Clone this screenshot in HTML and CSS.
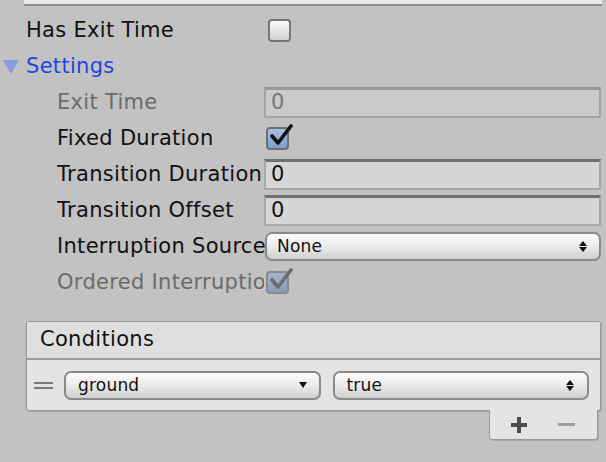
FILE: index.html
```html
<!DOCTYPE html>
<html>
<head>
<meta charset="utf-8">
<link rel="stylesheet" href="styles.css">
</head>
<body>
<div class="topbar"></div>
<div class="props">
  <div class="row outer">
    <div class="label">Has Exit Time</div>
    <div class="check"></div>
  </div>
  <div class="row foldout">
    <span class="tri"></span>
    <span class="fold-label">Settings</span>
  </div>
  <div class="row inner disabled">
    <div class="label">Exit Time</div>
    <div class="field field-dis">0</div>
  </div>
  <div class="row inner">
    <div class="label">Fixed Duration</div>
    <div class="check check-on">
      <svg width="28" height="28" viewBox="0 0 28 28" class="tick"><path d="M5 12 L11 19 L24 2" fill="none" stroke="#111" stroke-width="3.6" stroke-linecap="round" stroke-linejoin="round"/></svg>
    </div>
  </div>
  <div class="row inner">
    <div class="label">Transition Duration</div>
    <div class="field">0</div>
  </div>
  <div class="row inner">
    <div class="label">Transition Offset</div>
    <div class="field">0</div>
  </div>
  <div class="row inner">
    <div class="label open">Interruption Source</div>
    <div class="popup"><span>None</span><span class="updown"><i class="up"></i><i class="down"></i></span></div>
  </div>
  <div class="row inner disabled">
    <div class="label">Ordered Interruption</div>
    <div class="check check-on check-dis">
      <svg width="28" height="28" viewBox="0 0 28 28" class="tick"><path d="M5 12 L11 19 L24 2" fill="none" stroke="#6c6c6c" stroke-width="3.6" stroke-linecap="round" stroke-linejoin="round"/></svg>
    </div>
  </div>
</div>

<div class="list">
  <div class="list-header">Conditions</div>
  <div class="list-body">
    <div class="handle"><i></i><i></i></div>
    <div class="popup small"><span>ground</span><span class="down-only"></span></div>
    <div class="popup small"><span>true</span><span class="updown"><i class="up"></i><i class="down"></i></span></div>
  </div>
</div>
<div class="footer-wrap">
  <div class="footer">
    <span class="plus"></span>
    <span class="minus"></span>
  </div>
</div>
</body>
</html>
```
FILE: styles.css
```css
html, body {
  margin: 0;
  padding: 0;
  background: #c2c2c2;
  font-family: "DejaVu Sans", "Noto Sans", sans-serif;
  color: #111;
  width: 606px;
  height: 462px;
  overflow: hidden;
}
.topbar {
  margin-left: 24px;
  width: 578px;
  height: 4px;
  background: #e9e9e9;
  border-bottom: 2px solid #8b8b8b;
}
.props {
  padding-top: 6px;
}
.row {
  height: 36px;
  display: flex;
  align-items: center;
  font-size: 21px;
  letter-spacing: 0.3px;
}
.row.outer { padding-left: 26px; }
.row.outer .label { width: 240px; }
.row.inner { padding-left: 57px; }
.row.inner .label { width: 207px; }
.label {
  white-space: nowrap;
  overflow: hidden;
  flex: none;
}
.label.open { overflow: visible; }
.disabled .label { color: #6b6b6b; }

.foldout { padding-left: 3px; }
.tri {
  width: 0; height: 0;
  border-left: 8px solid transparent;
  border-right: 8px solid transparent;
  border-top: 14px solid #8a9be0;
  margin-right: 7px;
  margin-top: 1px;
}
.fold-label { color: #1f45e2; }

.check {
  position: relative;
  width: 19px;
  height: 19px;
  margin-left: 2px;
  border: 2px solid #777;
  border-radius: 4px;
  background: linear-gradient(#fbfbfb, #d2d2d2);
}
.check-on {
  background: linear-gradient(#a9c0e4, #7d9ccd);
  border-color: #6f6f6f;
}
.check-dis {
  background: linear-gradient(#a5b4cb, #8a9cb8);
  border-color: #8a8a8a;
}
.tick {
  position: absolute;
  left: -1px;
  top: -5px;
}

.field {
  flex: 1;
  margin-right: 5px;
  box-sizing: border-box;
  height: 31px;
  background: #d6d6d6;
  border: 2px solid #a8a8a8;
  border-top: 3px solid #707070;
  padding-left: 5px;
  line-height: 25px;
  font-size: 21px;
  color: #111;
}
.field-dis {
  background: #cacaca;
  border: 2px solid #a5a5a5;
  border-top: 3px solid #999;
  color: #777;
}

.popup {
  flex: 1;
  margin-right: 5px;
  margin-left: 1px;
  height: 29px;
  box-sizing: border-box;
  border: 2px solid #8a8a8a;
  border-radius: 7px;
  background: linear-gradient(#fdfdfd, #e8e8e8 55%, #cfcfcf);
  display: flex;
  align-items: center;
  justify-content: space-between;
  padding: 0 12px 0 10px;
  font-size: 17px;
  letter-spacing: 0.2px;
  color: #111;
}
.updown {
  display: flex;
  flex-direction: column;
  gap: 1px;
}
.updown i {
  display: block;
  width: 0; height: 0;
  border-left: 4px solid transparent;
  border-right: 4px solid transparent;
}
.updown .up { border-bottom: 5px solid #111; }
.updown .down { border-top: 5px solid #111; }

.list {
  margin: 21px 5px 0 26px;
  border: 1px solid #999;
  border-radius: 3px;
  box-shadow: 1px 1px 0 #a8a8a8, -1px 0 0 #b4b4b4;
  background: #e4e4e4;
}
.list-header {
  height: 36px;
  background: #dfdfdf;
  border-bottom: 2px solid #9c9c9c;
  padding-left: 13px;
  font-size: 21px;
  letter-spacing: 0.3px;
  line-height: 35px;
}
.list-body {
  height: 50px;
  display: flex;
  align-items: center;
  padding: 0 11px 0 7px;
  gap: 12px;
}
.handle {
  width: 19px;
  display: flex;
  flex-direction: column;
  gap: 3px;
  margin-right: -1px;
}
.handle i {
  display: block;
  height: 2px;
  background: #7a7a7a;
}
.popup.small {
  margin: 0;
  height: 29px;
  padding: 0 13px 0 12px;
}
.down-only {
  width: 0; height: 0;
  border-left: 4px solid transparent;
  border-right: 4px solid transparent;
  border-top: 6px solid #111;
  margin-right: -1px;
}
.footer-wrap {
  display: flex;
  justify-content: flex-end;
  margin-right: 8px;
}
.footer {
  width: 109px;
  height: 30px;
  margin-top: -1px;
  background: #e4e4e4;
  border: 1px solid #999;
  border-top: none;
  border-radius: 0 0 3px 3px;
  box-shadow: 1px 1px 0 #a8a8a8;
  display: flex;
  align-items: center;
  justify-content: space-between;
  padding: 0 22px 0 21px;
  box-sizing: border-box;
}
.plus {
  position: relative;
  width: 16px;
  height: 16px;
}
.plus::before, .plus::after {
  content: "";
  position: absolute;
  background: #4b4b4b;
}
.plus::before { left: 0; right: 0; top: 6px; height: 4px; }
.plus::after { top: 0; bottom: 0; left: 6px; width: 4px; }
.minus {
  width: 17px;
  height: 3px;
  background: #9e9e9e;
}
```
